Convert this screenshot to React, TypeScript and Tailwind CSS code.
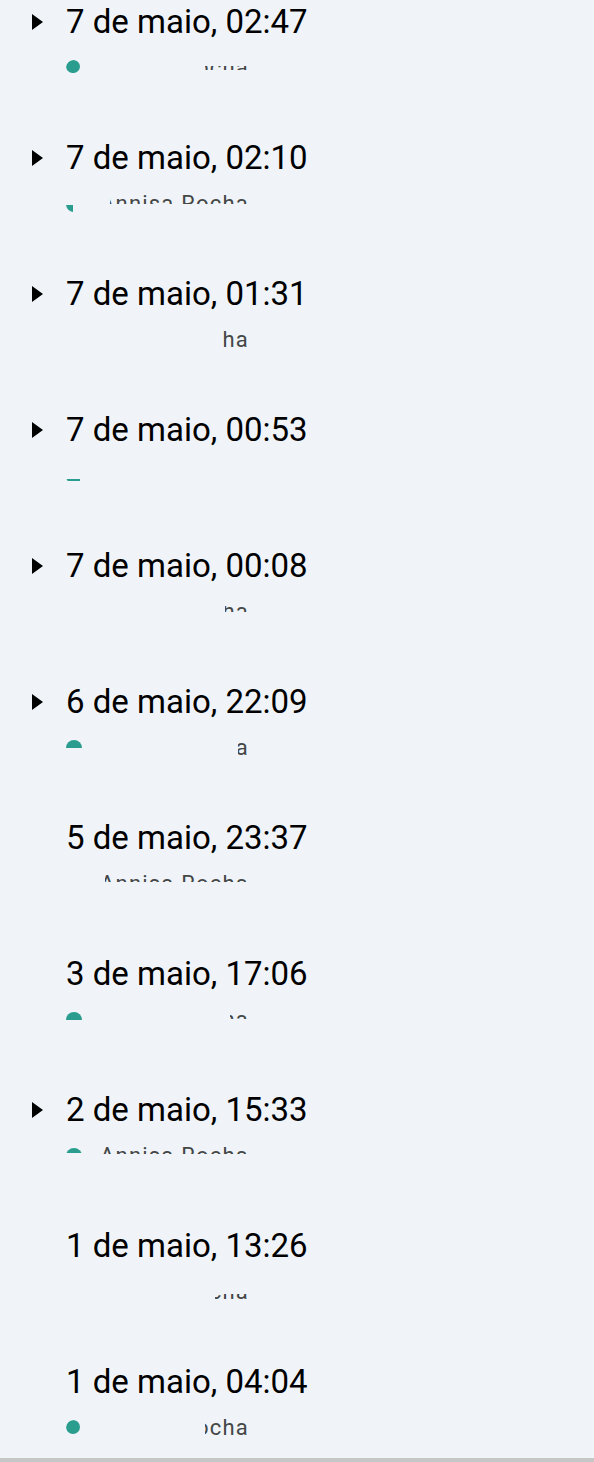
import React from 'react';

type Version = {
  id: number;
  label: string;
  caret: boolean;
  dotClip: string | null;
  nameClip: string;
};

const versions: Version[] = [
  { id: 1, label: '7 de maio, 02:47', caret: true, dotClip: '[clip-path:inset(0px_2px_3px_0px_round_8px)]', nameClip: '[clip-path:inset(10px_0px_10px_105px)]' },
  { id: 2, label: '7 de maio, 02:10', caret: true, dotClip: '[clip-path:inset(9px_9px_0px_0px)]', nameClip: '[clip-path:inset(3px_0px_12px_10px)]' },
  { id: 3, label: '7 de maio, 01:31', caret: true, dotClip: null, nameClip: '[clip-path:inset(0px_0px_0px_123px)]' },
  { id: 4, label: '7 de maio, 00:53', caret: true, dotClip: '[clip-path:inset(11px_2px_3px_0px)]', nameClip: '[clip-path:inset(0px_0px_24px_0px)]' },
  { id: 5, label: '7 de maio, 00:08', caret: true, dotClip: null, nameClip: '[clip-path:inset(6px_0px_12px_125px)]' },
  { id: 6, label: '6 de maio, 22:09', caret: true, dotClip: '[clip-path:inset(0px_0px_8px_0px)]', nameClip: '[clip-path:inset(0px_0px_0px_138px)]' },
  { id: 7, label: '5 de maio, 23:37', caret: false, dotClip: null, nameClip: '[clip-path:inset(2px_0px_14px_5px)]' },
  { id: 8, label: '3 de maio, 17:06', caret: false, dotClip: '[clip-path:inset(0px_0px_8px_0px)]', nameClip: '[clip-path:inset(2px_0px_13px_130px)]' },
  { id: 9, label: '2 de maio, 15:33', caret: true, dotClip: '[clip-path:inset(0px_0px_11px_0px)]', nameClip: '[clip-path:inset(0px_0px_14px_0px)]' },
  { id: 10, label: '1 de maio, 13:26', caret: false, dotClip: null, nameClip: '[clip-path:inset(14px_0px_0px_115px)]' },
  { id: 11, label: '1 de maio, 04:04', caret: false, dotClip: '[clip-path:inset(0px_2px_2px_0px_round_8px)]', nameClip: '[clip-path:inset(0px_0px_0px_105px)]' },
];

function Caret() {
  return (
    <svg width="11" height="16" viewBox="0 0 11 16" className="block">
      <path d="M0 0 L11 8 L0 16 Z" fill="#000" />
    </svg>
  );
}

export default function App() {
  return (
    <div className="h-[1462px] flex flex-col bg-[#f0f4f9] font-['Roboto','Liberation_Sans',sans-serif]">
      <div className="flex-1 overflow-hidden">
        {versions.map((v) => (
          <div key={v.id} className="h-[136px] flex flex-col">
            <div className="flex items-center h-[44px]">
              <div className="w-[66px] pl-[32px] flex items-center">
                {v.caret ? <Caret /> : null}
              </div>
              <span className="text-[33px] leading-[44px] text-black">{v.label}</span>
            </div>
            <div className="relative h-[24px] mt-[12px]">
              {v.dotClip && (
                <span className={`absolute left-[66px] top-[4px] w-4 h-4 rounded-full bg-[#2a9d8f] ${v.dotClip}`} />
              )}
              <span
                className={`absolute left-[100px] top-0 text-[22px] leading-[24px] text-[#444746] tracking-[1.2px] ${v.nameClip}`}
              >
                Annisa Rocha
              </span>
            </div>
          </div>
        ))}
      </div>
      <div className="h-[4px] bg-[#c4c7c5]" />
    </div>
  );
}
